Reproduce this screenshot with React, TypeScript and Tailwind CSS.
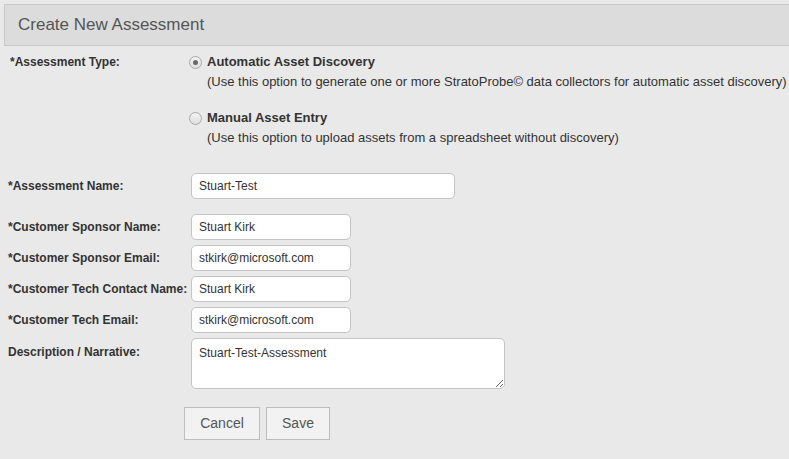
import { useState } from 'react';

const CONTACT_FIELDS = [
  { label: '*Customer Sponsor Name:', value: 'Stuart Kirk' },
  { label: '*Customer Sponsor Email:', value: 'stkirk@microsoft.com' },
  { label: '*Customer Tech Contact Name:', value: 'Stuart Kirk' },
  { label: '*Customer Tech Email:', value: 'stkirk@microsoft.com' },
];

const OPTIONS = [
  {
    id: 'auto',
    title: 'Automatic Asset Discovery',
    hint: '(Use this option to generate one or more StratoProbe© data collectors for automatic asset discovery)',
  },
  {
    id: 'manual',
    title: 'Manual Asset Entry',
    hint: '(Use this option to upload assets from a spreadsheet without discovery)',
  },
];

function Radio({ checked }: { checked: boolean }) {
  return (
    <span className="w-[13px] h-[13px] rounded-full border border-[#a8a8a8] bg-gradient-to-b from-[#f4f4f4] to-[#dedede] flex items-center justify-center shrink-0">
      {checked && <span className="w-[5px] h-[5px] rounded-full bg-[#6a6a6a]" />}
    </span>
  );
}

export default function App() {
  const [type, setType] = useState('auto');

  return (
    <div className="w-full h-[459px] overflow-hidden bg-[#e9e9e9] text-[#333] font-['Liberation_Sans',Arial,sans-serif] flex flex-col">
      {/* Header */}
      <div className="ml-1 mt-1 h-[42px] border border-r-0 border-[#c8c8c8] bg-[#dcdcdc] flex items-center pl-[13px] text-[17px] text-[#555]">
        Create New Assessment
      </div>

      {/* Assessment type */}
      <div className="flex mt-[7px]">
        <div className="w-[181px] pl-[10px] text-[12px] font-bold leading-[18px]">*Assessment Type:</div>
        <div className="flex flex-col gap-[18px]">
          {OPTIONS.map((o) => (
            <div key={o.id} className="flex flex-col cursor-pointer" onClick={() => setType(o.id)}>
              <div className="flex items-center gap-[5px] pl-[8px] h-[18px]">
                <Radio checked={type === o.id} />
                <span className="text-[13px] font-bold">{o.title}</span>
              </div>
              <div className="pl-[26px] text-[13px] leading-[18px] mt-[2px] whitespace-nowrap">{o.hint}</div>
            </div>
          ))}
        </div>
      </div>

      {/* Assessment name */}
      <div className="flex items-center mt-[26px]">
        <label className="w-[191px] pl-[8px] text-[12px] font-bold">*Assessment Name:</label>
        <input
          defaultValue="Stuart-Test"
          className="w-[264px] h-[26px] rounded-[5px] border border-[#c4c4c4] bg-white px-[7px] text-[12px] text-[#333] outline-none"
        />
      </div>

      {/* Contacts */}
      <div className="flex flex-col gap-[5px] mt-[15px]">
        {CONTACT_FIELDS.map((f) => (
          <div key={f.label} className="flex items-center">
            <label className="w-[191px] pl-[8px] text-[12px] font-bold whitespace-nowrap">{f.label}</label>
            <input
              defaultValue={f.value}
              className="w-[160px] h-[26px] rounded-[5px] border border-[#c4c4c4] bg-white px-[7px] text-[12px] text-[#333] outline-none"
            />
          </div>
        ))}
        <div className="flex items-start">
          <label className="w-[191px] pl-[8px] pt-[5px] text-[12px] font-bold">Description / Narrative:</label>
          <textarea
            defaultValue="Stuart-Test-Assessment"
            className="w-[314px] h-[51px] rounded-[5px] border border-[#c4c4c4] bg-white px-[7px] py-[5px] text-[12px] text-[#333] outline-none"
          />
        </div>
      </div>

      {/* Actions */}
      <div className="flex gap-[6px] ml-[184px] mt-[18px]">
        <button className="w-[76px] h-[33px] border border-[#bdbdbd] bg-[#f2f2f2] text-[14px] text-[#555]">Cancel</button>
        <button className="w-[64px] h-[33px] border border-[#bdbdbd] bg-[#f2f2f2] text-[14px] text-[#555]">Save</button>
      </div>
    </div>
  );
}
